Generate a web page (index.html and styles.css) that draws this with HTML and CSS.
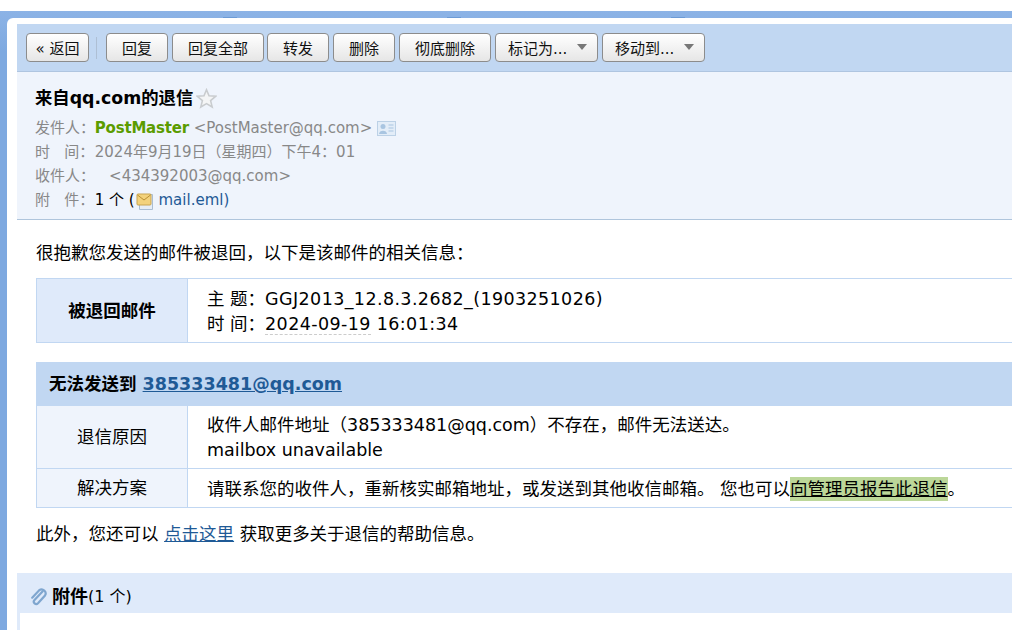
FILE: index.html
```html
<!DOCTYPE html>
<html lang="zh-CN">
<head>
<meta charset="utf-8">
<title>来自qq.com的退信</title>
<link rel="stylesheet" href="styles.css">
</head>
<body>
<div class="frame">
  <div class="sheet">
    <div class="toolbar">
      <button class="btn btn-back">« 返回</button>
      <span class="sep"></span>
      <button class="btn btn-2">回复</button>
      <button class="btn btn-4">回复全部</button>
      <button class="btn btn-2 btn-tight">转发</button>
      <button class="btn btn-2">删除</button>
      <button class="btn btn-4">彻底删除</button>
      <button class="btn btn-menu">标记为...<i class="caret"></i></button>
      <button class="btn btn-menu">移动到...<i class="caret"></i></button>
    </div>
    <div class="head">
      <h1 class="subject">来自qq.com的退信<svg class="star" width="21" height="21" viewBox="0 0 21 21"><path d="M10.500 1.800l2.500 6 6.600.5-5 4.300 1.600 6.400-5.700-3.400-5.700 3.400 1.600-6.400-5-4.300 6.600-.5z" fill="#f4f5f6" stroke="#c9cccf" stroke-width="1.600"/></svg></h1>
      <div class="meta"><span class="label">发件人：</span> <b class="sender">PostMaster</b> &lt;PostMaster@qq.com&gt; <svg class="card" width="19" height="15" viewBox="0 0 19 15"><rect x=".5" y=".5" width="18" height="14" fill="#e3edf8" stroke="#bcd1e6"/><circle cx="6" cy="5.500" r="2.500" fill="#a9c5e1"/><path d="M2 13c0-4.500 8-4.500 8 0z" fill="#a9c5e1"/><path d="M11.500 4h5M11.500 7h5M11.500 10h5" stroke="#a9c5e1"/></svg></div>
      <div class="meta"><span class="label">时&nbsp;&nbsp;&nbsp;间：</span> 2024年9月19日（星期四）下午4：01</div>
      <div class="meta"><span class="label">收件人：</span> &nbsp;&nbsp;&nbsp;&lt;434392003@qq.com&gt;</div>
      <div class="meta"><span class="label">附&nbsp;&nbsp;&nbsp;件：</span> <span class="count">1 个 (</span><svg class="eml" width="18" height="20" viewBox="0 0 18 20"><path d="M3.500 3.500h13v15h-13z" fill="#e6edf5" stroke="#a9bdd3"/><rect x="1" y="3" width="14" height="11" rx="1" fill="#f3d27c" stroke="#c9a550"/><path d="M1.500 4l6.500 5 6.500-5" fill="none" stroke="#b98f35"/></svg> <a class="file">mail.eml)</a></div>
    </div>
    <div class="body">
      <p class="intro">很抱歉您发送的邮件被退回，以下是该邮件的相关信息：</p>
      <table class="info">
        <tr>
          <th class="side side-strong">被退回邮件</th>
          <td class="info-cell">主 题：<span class="digits">GGJ2013_12.8.3.2682_(1903251026)</span><br>时 间：<span class="digits"><span class="dated">2024-09-19</span> 16:01:34</span></td>
        </tr>
      </table>
      <div class="fail-title">无法发送到 <a class="fail-addr">385333481@qq.com</a></div>
      <table class="info fail">
        <tr class="row-reason">
          <th class="side">退信原因</th>
          <td class="info-cell">收件人邮件地址（385333481@qq.com）不存在，邮件无法送达。<br>mailbox unavailable</td>
        </tr>
        <tr class="row-fix">
          <th class="side">解决方案</th>
          <td class="info-cell">请联系您的收件人，重新核实邮箱地址，或发送到其他收信邮箱。 您也可以<a class="report">向管理员报告此退信</a>。</td>
        </tr>
      </table>
      <p class="more">此外，您还可以 <a class="link">点击这里</a> 获取更多关于退信的帮助信息。</p>
    </div>
    <div class="attach">
      <svg class="clip" width="18" height="20" viewBox="0 0 18 20"><path d="M12.500 4.500l-8 8.500a2.400 2.400 0 0 0 3.500 3.300l7-7.800a4 4 0 0 0-5.800-5.300l-7 7.500" fill="none" stroke="#7fa6cf" stroke-width="2.200" stroke-linecap="round"/></svg>
      <b class="attach-title">附件</b><span class="attach-count">(1 个)</span>
    </div>
    <div class="attach-body"></div>
  </div>
</div>
</body>
</html>
```
FILE: styles.css
```css
html, body {
  margin: 0;
  padding: 0;
  height: 630px;
  overflow: hidden;
  background: #fff;
}
body {
  font-family: "DejaVu Sans", "Noto Sans CJK SC", sans-serif;
  font-size: 17.5px;
  color: #000;
}
.frame {
  margin-top: 11px;
  height: 619px;
  padding: 7px 0 0 7px;
  box-sizing: border-box;
  background:
    linear-gradient(#6c9bd6, #6c9bd6) 223px 6px / 14px 2px no-repeat,
    linear-gradient(#6c9bd6, #6c9bd6) 447px 6px / 14px 2px no-repeat,
    linear-gradient(#6c9bd6, #6c9bd6) 671px 6px / 14px 2px no-repeat,
    linear-gradient(#8cb3e6, #7ea9e0 40px);
}
.sheet {
  height: 100%;
  padding: 6px 0 0 10px;
  box-sizing: border-box;
  background: #fff;
  border-top-left-radius: 6px;
  overflow: hidden;
}
.toolbar {
  display: flex;
  align-items: center;
  gap: 4px;
  height: 47px;
  padding: 0 0 0 9px;
  background: #c1d7f2;
  border-bottom: 1px solid #afc5e0;
}
.btn {
  height: 29px;
  padding: 0;
  border: 1px solid #8c8c8c;
  border-radius: 4px;
  background: linear-gradient(#fff, #e6e6e6);
  font: 15px "DejaVu Sans", "Noto Sans CJK SC", sans-serif;
  color: #111;
  flex: none;
}
.btn-back { width: 63px; }
.btn-2 { width: 62px; }
.btn-4 { width: 92px; }
.btn-tight { margin-left: -1px; }
.btn-menu {
  width: 103px;
  display: flex;
  align-items: center;
  padding-left: 12px;
  gap: 10px;
}
.sep {
  width: 1px;
  height: 22px;
  margin: 0 5px 0 3px;
  background: #aebfd4;
}
.caret {
  width: 0;
  height: 0;
  margin-top: -2px;
  border-left: 5px solid transparent;
  border-right: 5px solid transparent;
  border-top: 6px solid #777;
}
.head {
  height: 134px;
  padding: 13px 0 0 18px;
  background: #eff4fc;
  border-bottom: 1px solid #afc5dc;
  font-size: 15px;
  color: #888;
}
.subject {
  margin: 0 0 5px;
  height: 26px;
  line-height: 26px;
  display: flex;
  align-items: center;
  font-size: 17.33px;
  color: #000;
}
.star { margin-left: 3px; }
.meta {
  height: 24px;
  line-height: 24px;
  white-space: nowrap;
}
.meta svg { vertical-align: middle; }
.label { display: inline-block; width: 55px; color: #888; }
.sender { color: #5b9c00; letter-spacing: -.2px; }
.count { color: #000; }
.eml { margin: 0 0 0 1px; }
.file { color: #1f5a96; }
.body { padding: 21px 0 0 19px; }
.intro { margin: 0 0 13px; line-height: 24px; }
.info {
  width: 1000px;
  border-collapse: collapse;
  table-layout: fixed;
  line-height: 25px;
}
.info th, .info td {
  border: 1px solid #c1d7f2;
  padding: 0;
}
.side {
  width: 150px;
  background: #dfeafa;
  font-weight: bold;
}
.side-strong { height: 61px; padding-top: 2px !important; }
.info-cell { padding: 2px 0 0 19px !important; background: #fff; }
.digits { letter-spacing: .4px; }
.dated { border-bottom: 1px dashed #ccc; }
.fail-title {
  width: 988px;
  height: 43px;
  line-height: 45px;
  margin-top: 19px;
  padding-left: 13px;
  font-weight: bold;
  background: #c1d7f2;
}
.fail-addr, .link { color: #1f5a96; text-decoration: underline; }
.fail .side { background: #eff4fc; font-weight: normal; }
.row-reason th { height: 62px; }
.row-fix th { height: 38px; }
.report {
  background: #bcd799;
  text-decoration: underline;
  padding: 2px 0;
}
.more { margin: 14px 0 0; line-height: 24px; }
.attach {
  margin-top: 27px;
  height: 40px;
  box-sizing: border-box;
  display: flex;
  align-items: center;
  padding: 4px 0 0 13px;
  background: #dfeafa;
}
.clip { margin: 3px 4px 0 0; }
.attach-title { font-size: 18px; font-weight: bold; }
.attach-count { font-size: 16px; }
.attach-body {
  height: 20px;
  background: #fff;
  border-left: 3px solid #dfeafa;
}
```
